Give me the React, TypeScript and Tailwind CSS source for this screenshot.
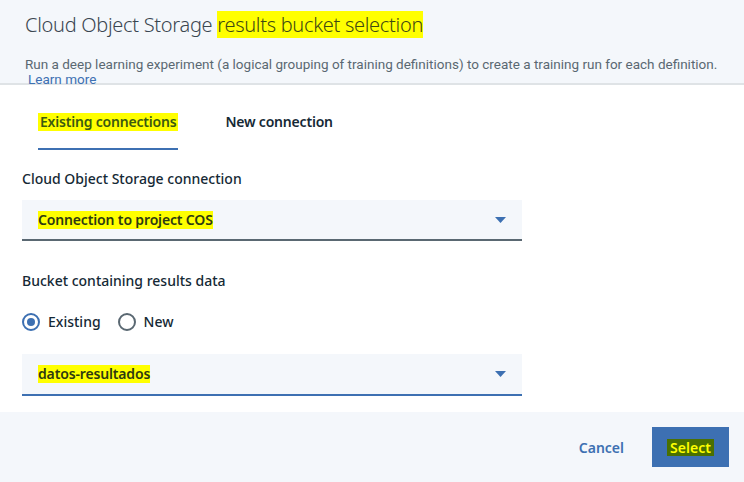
import React from "react";

const Caret = () => (
  <svg width="11" height="6" viewBox="0 0 11 6" className="block">
    <path d="M0 0 H11 L5.5 6 Z" fill="#3d70b2" />
  </svg>
);

export default function App() {
  return (
    <div
      className="w-[744px] h-[482px] flex flex-col bg-white overflow-hidden"
      style={{ fontFamily: '"Noto Sans", "Open Sans", sans-serif' }}
    >
      <div className="h-[85px] shrink-0 bg-[#f4f7fb] border-b-2 border-[#dfe3e6] px-[25px] pt-[12px]">
        <div className="text-[20px] leading-[26px] font-light text-[#3a4650] tracking-[-0.3px]">
          Cloud Object Storage{" "}
          <span className="bg-[#ffff00] text-[#3f4a12]">results bucket selection</span>
        </div>
        <div
          className="mt-[18px] text-[13.5px] leading-[16px] text-[#5a6872] whitespace-nowrap"
          style={{ fontFamily: 'Roboto, "Noto Sans", sans-serif' }}
        >
          Run a deep learning experiment (a logical grouping of training definitions) to create a training run for each definition.
        </div>
        <div
          className="pl-[3px] text-[13.5px] leading-[15px] text-[#3d70b2]"
          style={{ fontFamily: 'Roboto, "Noto Sans", sans-serif' }}
        >
          Learn more
        </div>
      </div>

      <div className="flex-1 px-[22px]">
        <div className="flex pl-[18px] pt-[28px] text-[14px] leading-[18px] font-semibold tracking-[-0.2px]">
          <div className="flex flex-col">
            <span className="px-[2px] -mx-[2px] bg-[#ffff00] text-[#3b5a10]">Existing connections</span>
            <div className="mt-[17px] h-[2px] bg-[#3d70b2] -mx-[2px]" />
          </div>
          <div className="ml-[49px] text-[#152935]">New connection</div>
        </div>

        <div className="mt-[20px] text-[14px] leading-[18px] font-medium text-[#152935]">
          Cloud Object Storage connection
        </div>
        <div className="mt-[12px] w-[500px] h-[41px] bg-[#f4f7fb] border-b-2 border-[#5a6872] flex items-center justify-between pl-[16px] pr-[16px]">
          <span className="bg-[#ffff00] text-[14px] leading-[18px] font-semibold tracking-[-0.15px] text-[#2e3a10]">
            Connection to project COS
          </span>
          <Caret />
        </div>

        <div className="mt-[31px] text-[14px] leading-[18px] font-medium text-[#152935]">
          Bucket containing results data
        </div>
        <div className="mt-[23px] flex items-center text-[14px] leading-[18px] font-medium text-[#152935]">
          <span className="w-[18px] h-[18px] rounded-full border-2 border-[#3d70b2] flex items-center justify-center">
            <span className="w-[8px] h-[8px] rounded-full bg-[#3d70b2]" />
          </span>
          <span className="ml-[8px]">Existing</span>
          <span className="ml-[17px] w-[18px] h-[18px] rounded-full border-2 border-[#5a6872]" />
          <span className="ml-[8px]">New</span>
        </div>
        <div className="mt-[23px] w-[500px] h-[42px] bg-[#f4f7fb] border-b-2 border-[#3d70b2] flex items-center justify-between pl-[16px] pr-[16px]">
          <span className="bg-[#ffff00] text-[14px] leading-[18px] font-semibold tracking-[-0.15px] text-[#2e3a10]">
            datos-resultados
          </span>
          <Caret />
        </div>
      </div>

      <div className="h-[70px] shrink-0 bg-[#f4f7fb] flex items-center justify-end pr-[15px]">
        <span className="text-[14px] font-semibold text-[#3d70b2] mr-[28px]">Cancel</span>
        <div className="w-[77px] h-[40px] bg-[#3d70b2] flex items-center justify-center">
          <span className="bg-[#4a7000] text-[#ffff00] text-[14px] leading-[17px] font-semibold px-[3px]">
            Select
          </span>
        </div>
      </div>
    </div>
  );
}
